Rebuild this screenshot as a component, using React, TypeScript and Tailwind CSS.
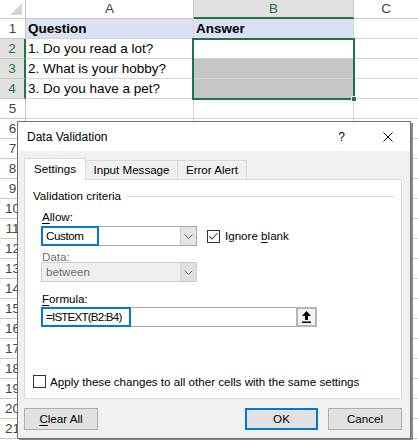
import React from "react";

const GRID = "border-[#d4d4d4]";

function HeaderRow() {
  return (
    <div className="flex h-[19px] text-[13.5px] text-[#444]">
      <div className={`relative w-[26px] h-[19px] border-r border-b border-[#c6c6c6] bg-white`}>
        <svg className="absolute left-[10px] top-[3px]" width="12" height="12" viewBox="0 0 12 12">
          <polygon points="12,0 12,12 0,12" fill="#d6d6d6" />
        </svg>
      </div>
      <div className="w-[168px] h-[19px] border-r border-b border-[#c6c6c6] bg-white flex items-center justify-center leading-none">A</div>
      <div className="w-[160px] h-[19px] border-r border-[#c6c6c6] border-b-2 border-b-[#217346] bg-[#e1e1e1] text-[#217346] flex items-center justify-center leading-none">B</div>
      <div className="flex-1 h-[19px] border-b border-[#c6c6c6] bg-white flex items-center justify-center leading-none">C</div>
    </div>
  );
}

const cellText: Record<number, [string, string, boolean]> = {
  1: ["Question", "Answer", true],
  2: ["1. Do you read a lot?", "", false],
  3: ["2. What is your hobby?", "", false],
  4: ["3. Do you have a pet?", "", false],
};

function Row({ n }: { n: number }) {
  const sel = n >= 2 && n <= 4;
  const data = cellText[n];
  const aBg = n === 1 ? "bg-[#d9e1f2]" : "bg-white";
  const bBg = n === 1 ? "bg-[#d9e1f2]" : n === 3 || n === 4 ? "bg-[#c6c6c6]" : "bg-white";
  return (
    <div className="flex h-[20px] text-[13.5px]">
      {sel ? (
        <div className="w-[26px] h-[20px] border-r-2 border-r-[#217346] border-b border-b-[#c6c6c6] bg-[#e1e1e1] text-[#217346] flex items-center justify-center leading-none pt-[1px]">
          {n}
        </div>
      ) : (
        <div className="w-[26px] h-[20px] border-r border-b border-[#c6c6c6] bg-white text-[#444] flex items-center justify-center leading-none pt-[1px]">
          {n}
        </div>
      )}
      <div className={`w-[168px] h-[20px] border-r border-b ${GRID} ${aBg} flex items-center pl-[2px] pt-[1px] leading-none text-black ${data && data[2] ? "font-bold" : ""}`}>
        {data ? data[0] : ""}
      </div>
      <div className={`w-[160px] h-[20px] border-r border-b ${GRID} ${bBg} flex items-center pl-[2px] pt-[1px] leading-none text-black ${data && data[2] ? "font-bold" : ""}`}>
        {data ? data[1] : ""}
      </div>
      <div className={`flex-1 h-[20px] border-b ${GRID} bg-white`}></div>
    </div>
  );
}

function Chevron({ color = "#606060" }: { color?: string }) {
  return (
    <svg width="9" height="5" viewBox="0 0 9 5">
      <polyline points="0.5,0.5 4.5,4.5 8.5,0.5" fill="none" stroke={color} strokeWidth="1" />
    </svg>
  );
}

function Dialog() {
  return (
    <div className="absolute left-[17px] top-[121px] w-[394px] h-[318px] border border-[#707070] bg-[#f0f0f0] shadow-[2px_2px_0_#8a8a8a] text-[11.6px] text-black font-['Liberation_Sans',Arial,sans-serif]">
      {/* title bar */}
      <div className="h-[29px] bg-white flex items-center pl-[9px] pr-[17px]">
        <span className="flex-1 leading-none text-[12px]">Data Validation</span>
        <span className="leading-none mr-[38px] text-[12px]">?</span>
        <svg width="10" height="10" viewBox="0 0 10 10">
          <line x1="0.5" y1="0.5" x2="9.5" y2="9.5" stroke="#000" strokeWidth="1" />
          <line x1="9.5" y1="0.5" x2="0.5" y2="9.5" stroke="#000" strokeWidth="1" />
        </svg>
      </div>
      {/* body */}
      <div className="pl-[6px] pt-[7px]">
        {/* tabs */}
        <div className="flex items-end h-[22px] -mb-px relative z-10">
          <div className="w-[62px] h-[22px] bg-white border border-b-0 border-[#d9d9d9] flex items-center justify-center leading-none pb-[1px]">
            Settings
          </div>
          <div className="w-[92px] h-[20px] border-t border-r border-b border-[#d9d9d9] flex items-center justify-center leading-none">
            Input Message
          </div>
          <div className="w-[69px] h-[20px] border-t border-r border-b border-[#d9d9d9] flex items-center justify-center leading-none">
            Error Alert
          </div>
        </div>
        {/* panel */}
        <div className="w-[378px] h-[220px] bg-white border border-[#d9d9d9] flex flex-col">
          <div className="mt-[9px] h-[14px] leading-[14px] flex items-center pl-[8px] pr-[6px]">
            <span>Validation criteria</span>
            <div className="flex-1 h-px bg-[#dcdcdc] ml-[6px]"></div>
          </div>
          <div className="mt-[7px] h-[14px] leading-[14px] pl-[17px]">
            <span className="underline underline-offset-[2px]">A</span>llow:
          </div>
          <div className="mt-[2px] h-[20px] flex items-center pl-[16px]">
            <div className="relative w-[156px] h-[20px] border border-[#a9a9a9] bg-white flex items-center">
              <span className="pl-[4px] leading-none tracking-[-0.4px]">Custom</span>
              <div className="absolute right-0 top-0 w-[16px] h-[18px] bg-[#e5e5e5] border-l border-[#cfcfcf] flex items-center justify-center">
                <Chevron />
              </div>
              <div className="absolute -left-px -top-px w-[58px] h-[20px] border-2 border-[#0078d7]"></div>
            </div>
            <div className="ml-[10px] w-[13px] h-[13px] border border-[#333] bg-white flex items-center justify-center">
              <svg width="11" height="11" viewBox="0 0 11 11">
                <polyline points="1.5,5.5 4,8 9.5,2" fill="none" stroke="#444" strokeWidth="1.1" />
              </svg>
            </div>
            <span className="ml-[5px] leading-none">
              Ignore <span className="underline underline-offset-[2px]">b</span>lank
            </span>
          </div>
          <div className="mt-[5px] h-[11px] leading-[12px] pl-[17px] text-[#6d6d6d]">Data:</div>
          <div className="h-[20px] flex items-center pl-[16px]">
            <div className="relative w-[156px] h-[20px] border border-[#cccccc] bg-[#efefef] flex items-center">
              <span className="pl-[4px] leading-none text-[#6d6d6d]">between</span>
              <div className="absolute right-0 top-0 w-[16px] h-[18px] bg-[#e0e0e0] border-l border-[#d4d4d4] flex items-center justify-center">
                <Chevron color="#7a7a7a" />
              </div>
            </div>
          </div>
          <div className="mt-[10px] h-[14px] leading-[14px] pl-[17px]">
            <span className="underline underline-offset-[2px]">F</span>ormula:
          </div>
          <div className="mt-[1px] h-[20px] flex items-center pl-[16px]">
            <div className="relative w-[276px] h-[20px] border border-[#a9a9a9] bg-white flex items-center">
              <span className="pl-[4px] leading-none tracking-[-0.8px]">=ISTEXT(B2:B4)</span>
              <div className="absolute -right-px -top-px w-[21px] h-[20px] border-2 border-[#b4b4b4] bg-[#f4f4f4] flex items-center justify-center">
                <svg width="9" height="12" viewBox="0 0 9 12">
                  <path d="M4.5 0 L9 5 H6 V9 H3 V5 H0 Z" fill="#000" />
                  <rect x="0" y="10.5" width="9" height="1.5" fill="#000" />
                </svg>
              </div>
              <div className="absolute -left-px -top-px w-[90px] h-[20px] border-2 border-[#0078d7]"></div>
            </div>
          </div>
          <div className="mt-[48px] h-[13px] flex items-center pl-[8px]">
            <div className="w-[13px] h-[13px] border border-[#333] bg-white"></div>
            <span className="ml-[4px] leading-none">
              A<span className="underline underline-offset-[2px]">p</span>ply these changes to all other cells with the same settings
            </span>
          </div>
        </div>
        {/* buttons */}
        <div className="mt-[9px] flex w-[378px]">
          <div className="w-[74px] h-[22px] bg-[#e1e1e1] border border-[#adadad] flex items-center justify-center leading-none">
            <span className="underline underline-offset-[2px]">C</span>lear All
          </div>
          <div className="flex-1"></div>
          <div className="w-[73px] h-[22px] bg-[#e1e1e1] border-2 border-[#0078d7] flex items-center justify-center leading-none">
            OK
          </div>
          <div className="ml-[10px] w-[74px] h-[22px] bg-[#e1e1e1] border border-[#adadad] flex items-center justify-center leading-none">
            Cancel
          </div>
        </div>
      </div>
    </div>
  );
}

export default function App() {
  const rows = Array.from({ length: 21 }, (_, i) => i + 1);
  return (
    <div className="relative w-[418px] h-[440px] overflow-hidden bg-white font-['Liberation_Sans',Arial,sans-serif]">
      <HeaderRow />
      {rows.map((n) => (
        <Row key={n} n={n} />
      ))}
      {/* selection B2:B4 */}
      <div className="absolute left-[192px] top-[38px] w-[163px] h-[62px] border-2 border-[#217346]"></div>
      <div className="absolute left-[351px] top-[96px] w-[6px] h-[6px] bg-[#217346] border border-white"></div>
      <Dialog />
    </div>
  );
}
